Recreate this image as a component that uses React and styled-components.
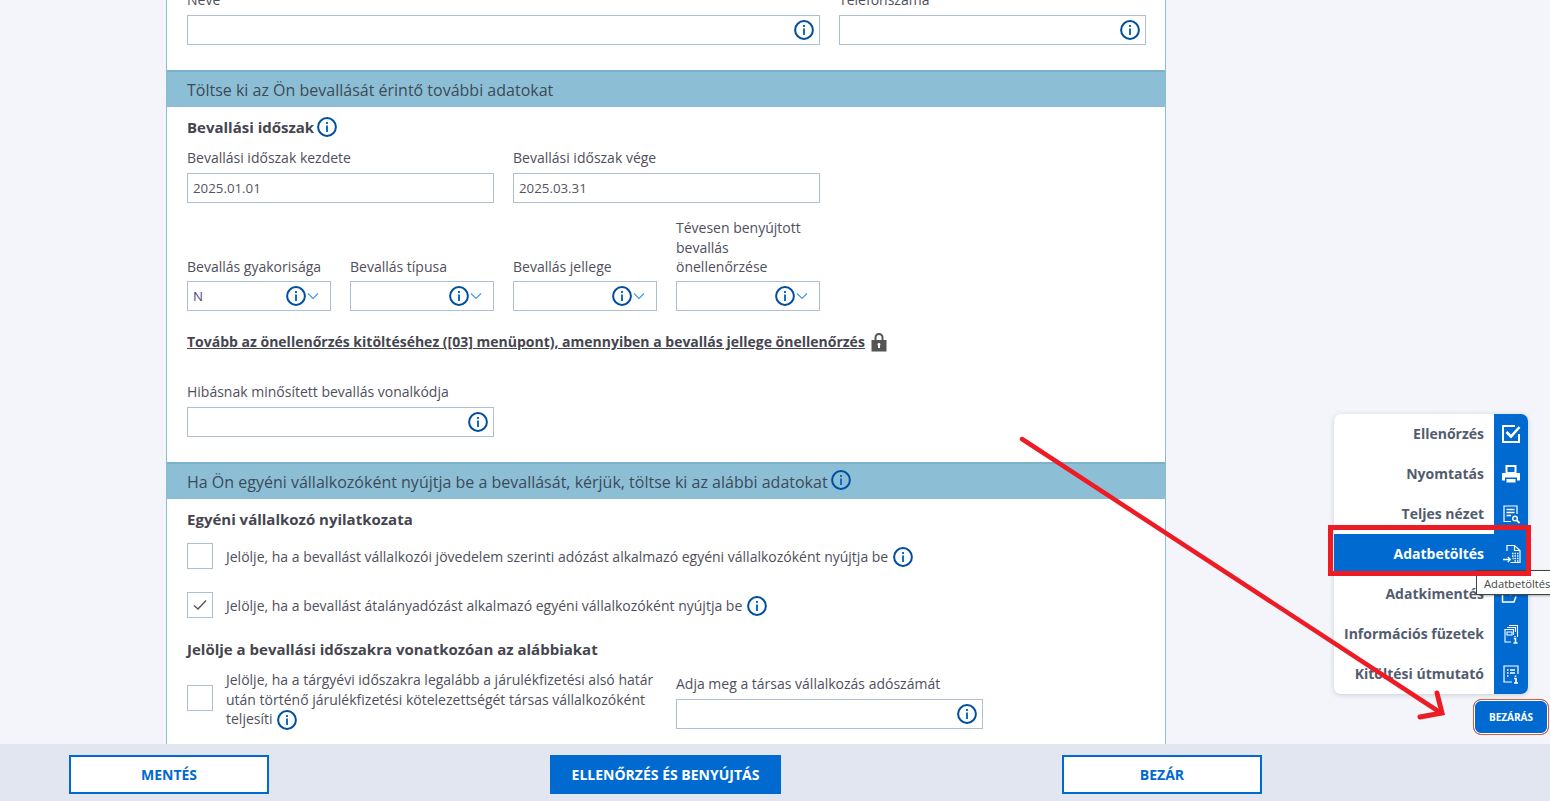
import React from "react";
import styled, { createGlobalStyle } from "styled-components";

const GlobalStyle = createGlobalStyle`
  html, body { margin: 0; padding: 0; height: 100%; overflow: hidden; }
  body { background: #f3f5fa; font-family: "Open Sans", "Liberation Sans", sans-serif; color: #4a4a58; }
  * { box-sizing: border-box; }
`;

const Page = styled.div`
  height: 801px;
  display: flex;
  flex-direction: column;
  overflow: hidden;
`;
const Scroller = styled.div`
  height: 744px;
  overflow: hidden;
`;
const Panel = styled.div`
  width: 1000px;
  margin: -25px 0 0 166px;
  background: #fff;
  border-left: 1px solid #8dbdd4;
  border-right: 1px solid #8dbdd4;
`;
const Section = styled.div`
  padding: ${p => p.$pad || "0 20px"};
`;
const SectionHeader = styled.div`
  height: 37px;
  background: #8cbfd6;
  border-top: 2px solid #7cb1cb;
  padding-left: 20px;
  display: flex;
  align-items: center;
  gap: 3px;
  font-size: 16px;
  color: #3d4a58;
`;
const HeaderIcon = styled.span`
  display: flex;
  margin-bottom: 4px;
`;
const Row = styled.div`
  display: grid;
  grid-template-columns: ${p => p.$cols || "repeat(3, 307px)"};
  column-gap: 19px;
  align-items: end;
  margin-top: ${p => p.$top || 0}px;
`;
const Field = styled.div`
  min-width: 0;
  padding-top: ${p => p.$top || 0}px;
`;
const Label = styled.div`
  font-size: 14px;
  line-height: 19.5px;
  color: #4f4f5c;
  margin-bottom: ${p => p.$gap ?? 5.5}px;
`;
const InputBox = styled.div`
  height: 30px;
  border: 1px solid #aebfd2;
  background: #fff;
  display: flex;
  align-items: center;
  justify-content: space-between;
  padding: 0 5px;
  font-size: 13.3px;
  color: ${p => p.$tint || "#555562"};
`;
const RightIcons = styled.div`
  margin-left: auto;
  display: flex;
  align-items: center;
  padding-right: ${p => p.$pr ?? 0}px;
`;
const Heading = styled.div`
  font-size: 15px;
  font-weight: 700;
  line-height: 20px;
  color: #45454f;
  display: flex;
  align-items: center;
  gap: 3px;
  margin-top: ${p => p.$top || 0}px;
`;
const LinkRow = styled.div`
  display: flex;
  align-items: center;
  gap: 6px;
  margin-top: ${p => p.$top || 0}px;
`;
const StrongLink = styled.a`
  font-size: 14px;
  font-weight: 700;
  line-height: 20px;
  color: #45454f;
  text-decoration: underline;
`;
const CheckRow = styled.div`
  display: flex;
  align-items: ${p => p.$align || "center"};
  gap: 13px;
  margin-top: ${p => p.$top || 0}px;
`;
const CheckBox = styled.div`
  width: 26px;
  height: 26px;
  flex: none;
  margin-top: ${p => p.$top || 0}px;
  border: 1px solid #aebfd2;
  background: #fff;
  display: flex;
  align-items: center;
  justify-content: center;
`;
const CheckText = styled.div`
  font-size: 14px;
  line-height: 19.5px;
  color: #4f4f5c;
  display: flex;
  align-items: center;
  gap: 5px;
  padding-top: 2px;
`;
const WrapText = styled.div`
  font-size: 14px;
  line-height: 19.5px;
  color: #4f4f5c;
  width: 440px;
`;
const SplitRow = styled.div`
  display: grid;
  grid-template-columns: 470px 307px;
  column-gap: 19px;
  align-items: start;
  margin-top: 11px;
`;
const InlineInfo = styled.span`
  display: inline-block;
  vertical-align: -6px;
  margin-left: 1px;
`;
const BottomBar = styled.div`
  height: 57px;
  background: #e1e6f0;
  padding: 11px 288px 7px 69px;
  display: flex;
  justify-content: space-between;
`;
const ActionButton = styled.button`
  width: ${p => p.$width || 200}px;
  height: 39px;
  border: 2px solid #006ad0;
  background: ${p => (p.$primary ? "#006ad0" : "#fff")};
  color: ${p => (p.$primary ? "#fff" : "#006ad0")};
  font-family: inherit;
  font-size: 14px;
  font-weight: 700;
  padding: 0;
`;
const SideMenu = styled.div`
  position: absolute;
  left: 1334px;
  top: 414px;
  width: 194px;
  background: #fff;
  border-radius: 7px;
  box-shadow: 0 1px 5px rgba(80, 90, 110, 0.25);
  overflow: hidden;
`;
const MenuItem = styled.div`
  height: 40px;
  display: flex;
  align-items: center;
  justify-content: flex-end;
  background: ${p => (p.$active ? "#006ad0" : "transparent")};
  color: ${p => (p.$active ? "#fff" : "#535c6e")};
  font-size: 14px;
  font-weight: 700;
`;
const MenuLabel = styled.span`
  padding: 0 10px 2px 0;
`;
const MenuIcon = styled.div`
  width: 34px;
  height: 40px;
  background: #006ad0;
  display: flex;
  align-items: center;
  justify-content: center;
  flex: none;
`;
const CloseButton = styled.button`
  position: absolute;
  left: 1473px;
  top: 699px;
  width: 76px;
  height: 36px;
  background: #006ad0;
  color: #fff;
  border: 1px solid #e05a3c;
  box-shadow: inset 0 0 0 1px #fff;
  border-radius: 8px;
  font-family: inherit;
  font-size: 10px;
  font-weight: 700;
  padding: 0;
`;
const Highlight = styled.div`
  position: absolute;
  left: 1328px;
  top: 525px;
  width: 203px;
  height: 51px;
  border: 5px solid #ed1c24;
  pointer-events: none;
`;
const Tip = styled.div`
  position: absolute;
  left: 1476px;
  top: 570px;
  width: 100px;
  height: 25px;
  background: #fff;
  border: 1px solid #444;
  box-shadow: 1px 1px 2px rgba(0, 0, 0, 0.3);
  font-size: 11.2px;
  line-height: 25px;
  padding-left: 7px;
  color: #444;
  white-space: nowrap;
`;
const ArrowLayer = styled.svg`
  position: absolute;
  left: 0;
  top: 0;
  pointer-events: none;
`;

const Info = ({ size = 20 }) => (
  <svg width={size} height={size} viewBox="0 0 20 20" fill="none">
    <circle cx="10" cy="10" r="8.9" stroke="#004f9e" strokeWidth="2" />
    <rect x="9" y="8.5" width="2" height="6.5" fill="#0c6fc4" />
    <rect x="9" y="5" width="2" height="2" fill="#0c6fc4" />
  </svg>
);
const Chevron = () => (
  <svg width="12" height="8" viewBox="0 0 12 8" fill="none" style={{ marginLeft: 1 }}>
    <path d="M1 1.5 L6 6.5 L11 1.5" stroke="#3f97e0" strokeWidth="1.1" />
  </svg>
);
const Lock = () => (
  <svg width="16" height="20" viewBox="0 0 16 20">
    <path d="M3.5 8 V5.5 a4.5 4.5 0 0 1 9 0 V8 h-2 V5.5 a2.5 2.5 0 0 0 -5 0 V8 Z" fill="#555" />
    <path d="M0.5 8 H15.5 V19.5 H0.5 Z M8 11 a1.5 1.5 0 0 0 -1 2.6 V16 h2 v-2.4 A1.5 1.5 0 0 0 8 11 Z" fill="#555" fillRule="evenodd" />
  </svg>
);
const Tick = () => (
  <svg width="14" height="12" viewBox="0 0 14 12" fill="none">
    <path d="M1 6.5 L5 10 L13 1.5" stroke="#555" strokeWidth="1.4" />
  </svg>
);

const icon = { width: 20, height: 20, viewBox: "0 0 20 20", fill: "none", stroke: "#fff" };
const IconCheck = () => (
  <svg {...icon} strokeWidth="2">
    <path d="M14 2 H2 V18 H18 V10" />
    <path d="M5.5 8 L10 12.5 L18.5 3" strokeWidth="2.6" />
  </svg>
);
const IconPrint = () => (
  <svg {...icon} stroke="none">
    <path d="M4.5 1 H15.5 V9 H4.5 Z M6.5 3 V8 H13.5 V3 Z" fill="#fff" fillRule="evenodd" />
    <path d="M1 9 H19 V16.5 H16 V13.5 H4 V16.5 H1 Z" fill="#fff" />
    <path d="M5.5 15 H14.5 V18.5 H5.5 Z" fill="#fff" />
  </svg>
);
const IconSearchDoc = () => (
  <svg {...icon} strokeWidth="1.2">
    <path d="M10 17.5 H3 V2 H16 V10" />
    <path d="M5.5 5.5 H13.5 M5.5 8.5 H13.5 M5.5 11.5 H10" strokeWidth="1.5" />
    <circle cx="14" cy="14.5" r="2.3" strokeWidth="1.4" />
    <path d="M15.8 16.3 L18.5 19" strokeWidth="1.8" />
  </svg>
);
const IconImport = () => (
  <svg {...icon} strokeWidth="1.2">
    <path d="M6 7 V1.5 H13.5 L19 6.5 V18.5 H9.5" />
    <path d="M13.5 1.5 V6.5 H19" />
    <path d="M2 15.5 H9 M6.8 13 L9.3 15.5 L6.8 18" strokeWidth="1.3" />
    <path d="M11 9.5 h1.5 M13.5 9.5 h1.5 M16 9.5 h1.5 M11 12 h1.5 M13.5 12 h1.5 M16 12 h1.5 M11.5 14.5 h1.2 M13.5 14.5 h1.5 M16 14.5 h1.5 M13.5 17 h1.5 M16 17 h1.5" strokeWidth="1.5" />
  </svg>
);
const IconExport = () => (
  <svg {...icon} strokeWidth="1.5">
    <path d="M10 2 H1.5 V18 H13 L15 12.5" />
    <path d="M9 11 L17 2" strokeWidth="2" />
  </svg>
);
const IconBooks = () => (
  <svg {...icon} strokeWidth="1.1">
    <path d="M8 1.5 H16.5 V13" />
    <path d="M6 3.5 H14.5 V8" />
    <path d="M10 18 H4 V5.5 H12.5 V11" />
    <path d="M6 8 H11 V11 H6 Z" />
    <path d="M14 12 v1 M12.8 14.5 H14.5 V19 M12.5 19 H16.5" strokeWidth="1.5" />
  </svg>
);
const IconGuide = () => (
  <svg {...icon} strokeWidth="1.2">
    <path d="M11 18 H3 V2 H17 V10" />
    <path d="M6 6 h1.5 M9 6 H14 M6 9 h1.5 M9 9 H14 M6 12 h1.5" strokeWidth="1.5" />
    <path d="M14.5 11.5 v1.4 M13 14.5 H15 V19 M13 19 H17" strokeWidth="1.6" />
  </svg>
);

const menu = [
  { label: "Ellenőrzés", Icon: IconCheck },
  { label: "Nyomtatás", Icon: IconPrint },
  { label: "Teljes nézet", Icon: IconSearchDoc },
  { label: "Adatbetöltés", Icon: IconImport, active: true },
  { label: "Adatkimentés", Icon: IconExport },
  { label: "Információs füzetek", Icon: IconBooks },
  { label: "Kitöltési útmutató", Icon: IconGuide },
];

const Select = ({ value, tint }) => (
  <InputBox $tint={tint}>
    {value}
    <RightIcons $pr={6}>
      <Info />
      <Chevron />
    </RightIcons>
  </InputBox>
);
const InfoInput = () => (
  <InputBox>
    <RightIcons $pr={0}>
      <Info />
    </RightIcons>
  </InputBox>
);

export default function App() {
  return (
    <Page>
      <GlobalStyle />
      <Scroller>
        <Panel>
          <Section $pad="15px 20px 25px">
            <Row $cols="633px 307px">
              <Field>
                <Label>Neve</Label>
                <InfoInput />
              </Field>
              <Field>
                <Label>Telefonszáma</Label>
                <InfoInput />
              </Field>
            </Row>
          </Section>
          <SectionHeader>Töltse ki az Ön bevallását érintő további adatokat</SectionHeader>
          <Section $pad="10px 20px 25px">
            <Heading>
              Bevallási időszak <Info />
            </Heading>
            <Row $top={11}>
              <Field>
                <Label>Bevallási időszak kezdete</Label>
                <InputBox>2025.01.01</InputBox>
              </Field>
              <Field>
                <Label>Bevallási időszak vége</Label>
                <InputBox>2025.03.31</InputBox>
              </Field>
            </Row>
            <Row $cols="repeat(4, 144px)" $top={15}>
              <Field>
                <Label $gap={4.5}>Bevallás gyakorisága</Label>
                <Select value="N" tint="#4d4a86" />
              </Field>
              <Field>
                <Label $gap={4.5}>Bevallás típusa</Label>
                <Select />
              </Field>
              <Field>
                <Label $gap={4.5}>Bevallás jellege</Label>
                <Select />
              </Field>
              <Field>
                <Label $gap={4.5}>Tévesen benyújtott bevallás önellenőrzése</Label>
                <Select />
              </Field>
            </Row>
            <LinkRow $top={21}>
              <StrongLink>
                Tovább az önellenőrzés kitöltéséhez ([03] menüpont), amennyiben a bevallás jellege önellenőrzés
              </StrongLink>
              <Lock />
            </LinkRow>
            <Row $top={30}>
              <Field>
                <Label>Hibásnak minősített bevallás vonalkódja</Label>
                <InfoInput />
              </Field>
            </Row>
          </Section>
          <SectionHeader>
            Ha Ön egyéni vállalkozóként nyújtja be a bevallását, kérjük, töltse ki az alábbi adatokat
            <HeaderIcon>
              <Info />
            </HeaderIcon>
          </SectionHeader>
          <Section $pad="10px 20px 30px">
            <Heading>Egyéni vállalkozó nyilatkozata</Heading>
            <CheckRow $top={14}>
              <CheckBox />
              <CheckText>
                Jelölje, ha a bevallást vállalkozói jövedelem szerinti adózást alkalmazó egyéni vállalkozóként nyújtja be <Info />
              </CheckText>
            </CheckRow>
            <CheckRow $top={23}>
              <CheckBox>
                <Tick />
              </CheckBox>
              <CheckText>
                Jelölje, ha a bevallást átalányadózást alkalmazó egyéni vállalkozóként nyújtja be <Info />
              </CheckText>
            </CheckRow>
            <Heading $top={21}>Jelölje a bevallási időszakra vonatkozóan az alábbiakat</Heading>
            <SplitRow>
              <CheckRow $align="flex-start">
                <CheckBox $top={15} />
                <WrapText>
                  Jelölje, ha a tárgyévi időszakra legalább a járulékfizetési alsó határ után történő járulékfizetési
                  kötelezettségét társas vállalkozóként teljesíti{" "}
                  <InlineInfo>
                    <Info />
                  </InlineInfo>
                </WrapText>
              </CheckRow>
              <Field $top={4}>
                <Label>Adja meg a társas vállalkozás adószámát</Label>
                <InfoInput />
              </Field>
            </SplitRow>
          </Section>
        </Panel>
      </Scroller>
      <BottomBar>
        <ActionButton>MENTÉS</ActionButton>
        <ActionButton $primary $width={231}>ELLENŐRZÉS ÉS BENYÚJTÁS</ActionButton>
        <ActionButton>BEZÁR</ActionButton>
      </BottomBar>
      <SideMenu>
        {menu.map(({ label, Icon, active }) => (
          <MenuItem key={label} $active={active}>
            <MenuLabel>{label}</MenuLabel>
            <MenuIcon>
              <Icon />
            </MenuIcon>
          </MenuItem>
        ))}
      </SideMenu>
      <Tip>Adatbetöltés</Tip>
      <Highlight />
      <CloseButton>BEZÁRÁS</CloseButton>
      <ArrowLayer width="1550" height="801" viewBox="0 0 1550 801" fill="none">
        <path d="M1022 439 L1441 713" stroke="#ed1c24" strokeWidth="4.5" strokeLinecap="round" />
        <path d="M1420 717 L1442 713 L1437 693" stroke="#ed1c24" strokeWidth="5" strokeLinecap="round" />
      </ArrowLayer>
    </Page>
  );
}
